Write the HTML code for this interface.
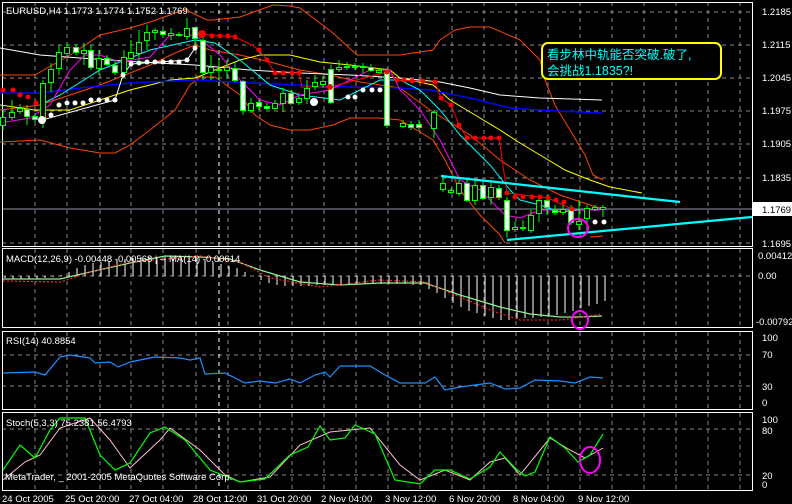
<!DOCTYPE html><html><head><meta charset="utf-8"><style>
html,body{margin:0;padding:0;background:#000;width:792px;height:504px;overflow:hidden}
svg{display:block;font-family:"Liberation Sans","Noto Sans CJK SC",sans-serif}
</style></head><body>
<svg width="792" height="504" viewBox="0 0 792 504" xmlns="http://www.w3.org/2000/svg">
<rect width="792" height="504" fill="#000"/>
<g stroke="#8a8a8a" stroke-width="1" stroke-dasharray="4,4" fill="none">
<path d="M2 12H752M2 45H752M2 78H752M2 111H752M2 144H752M2 178H752M2 243H752"/>
<path d="M35 2V247M67 2V247M100 2V247M131 2V247M163 2V247M196 2V247M228 2V247M260 2V247M292 2V247M324 2V247M356 2V247M388 2V247M420 2V247M452 2V247M484 2V247M516 2V247M548 2V247M580 2V247M612 2V247M644 2V247M676 2V247M708 2V247M740 2V247"/>
<path d="M35 249V327M67 249V327M100 249V327M131 249V327M163 249V327M196 249V327M228 249V327M260 249V327M292 249V327M324 249V327M356 249V327M388 249V327M420 249V327M452 249V327M484 249V327M516 249V327M548 249V327M580 249V327M612 249V327M644 249V327M676 249V327M708 249V327M740 249V327"/>
<path d="M35 332V409M67 332V409M100 332V409M131 332V409M163 332V409M196 332V409M228 332V409M260 332V409M292 332V409M324 332V409M356 332V409M388 332V409M420 332V409M452 332V409M484 332V409M516 332V409M548 332V409M580 332V409M612 332V409M644 332V409M676 332V409M708 332V409M740 332V409"/>
<path d="M35 413V490M67 413V490M100 413V490M131 413V490M163 413V490M196 413V490M228 413V490M260 413V490M292 413V490M324 413V490M356 413V490M388 413V490M420 413V490M452 413V490M484 413V490M516 413V490M548 413V490M580 413V490M612 413V490M644 413V490M676 413V490M708 413V490M740 413V490"/>
<path d="M2 276H752M2 355H752M2 386H752M2 429H752M2 475H752"/>
</g>
<g stroke="#fff" stroke-dasharray="4,4"><path d="M219 2V490"/></g>
<line x1="2" y1="209" x2="752" y2="209" stroke="#8a96a0"/>
<g fill="none" stroke="#fff" stroke-width="1">
<rect x="2.5" y="2.5" width="750" height="244"/>
<rect x="2.5" y="248.5" width="750" height="79"/>
<rect x="2.5" y="331.5" width="750" height="78"/>
<rect x="2.5" y="412.5" width="750" height="78"/>
</g>
<g fill="none" stroke-width="1">
<polyline stroke="#ff4500" points="0,75 35,75 75,52 100,35 130,28 150,22 170,15 187,9 190,12 207,20 213,20 240,17 273,5 290,6 300,8 333,33 357,55 400,55 433,50 440,40 455,30 470,27 490,27 520,40 540,60 545,80 555,105 570,130 585,155 593,175 603,180"/>
<polyline stroke="#ff4500" points="0,142 40,140 70,148 100,153 115,153 130,145 150,130 175,110 190,85 200,77 215,77 240,95 255,115 270,125 290,130 310,130 333,125 350,118 380,118 400,120 433,140 445,160 460,190 480,215 500,235 505,243"/>
<polyline stroke="#ff4500" points="590,237 603,236"/>
<polyline stroke="#ff4500" points="0,110 40,105 100,85 150,65 175,53 195,45 210,50 240,55 270,62 300,70 330,75 360,82 400,88 430,110 470,135 500,160 530,180 560,195 590,205 600,208"/>
<polyline stroke="#ffff00" points="0,105 35,110 70,110 100,100 130,90 170,80 195,78 215,70 240,60 260,55 290,55 320,62 350,65 390,70 400,78 433,85 450,100 470,112 500,130 520,143 540,155 565,170 590,180 610,187 642,193"/>
<polyline stroke="#fff" points="0,48 40,55 80,58 140,62 195,65 250,70 300,73 350,75 400,78 440,82 470,88 500,95 540,98 602,100"/>
<polyline stroke="#0000ff" stroke-width="1.5" points="0,93 40,93 80,88 130,83 195,80 250,83 300,85 350,87 400,88 430,90 470,98 510,108 540,110 602,113"/>
<polyline stroke="#00ffff" points="40,105 60,95 100,70 150,50 195,40 215,43 240,60 270,85 300,95 340,100 380,80 400,80 420,90 440,110 460,135 490,165 510,190 520,200 540,205 560,212 580,210 600,210"/>
<polyline stroke="#ff00ff" points="0,123 30,118 50,105 70,70 85,55 100,55 120,62 150,57 170,35 195,35 220,55 240,80 260,100 280,105 300,95 330,90 370,70 390,70 400,90 420,110 440,140 460,180 480,190 505,215 520,218 540,210 570,210 600,210"/>
<polyline stroke="#fff" points="195,48 187,60 131,64 123,75 115,100 42,120"/>
<polyline stroke="#f00" points="202,34 235,37 252,45 259,50 267,60 275,73 299,73 302,87 330,87 387,72 397,80 435,82 441,98 451,105 459,125 467,138 499,138 507,193 548,198 572,209"/>
</g>
<g stroke="#00ff00" stroke-width="1">
<path d="M3 110V130M12 100V120M20 104V114M27 105V125M35 113V122M43 80V128M51 63V92M59 45V75M67 42V56M76 44V55M84 43V65M91 45V70M99 50V75M107 55V66M115 60V75M124 50V78M131 40V60M139 30V60M147 25V50M155 28V40M163 28V36M171 28V40M179 32V37M187 18V40M195 27V45M203 35V80M211 55V80M219 60V80M227 60V78M235 62V82M243 80V115M251 98V113M259 99V110M267 103V110M275 100V110M283 88V112M291 90V105M299 95V105M307 80V104M315 75V90M323 76V88M331 65V104M339 60V72M347 62V70M355 63V70M363 63V73M371 64V72M379 68V74M387 68V128M403 120V128M411 121V130M419 120V130M434 110V138M443 175V192M451 188V194M459 180V196M467 180V202M475 178V205M483 182V200M491 180V205M499 185V200M507 197V238M515 222V232M523 220V231M531 210V233M539 195V222M547 195V215M555 205V215M563 205V215M571 205V225M579 200V230M587 205V230M595 205V211M603 205V217"/>
</g>
<g stroke="#00ff00" stroke-width="1">
<rect x="0.5" y="117.5" width="5" height="8" fill="#000"/>
<rect x="9.5" y="112.5" width="5" height="5" fill="#000"/>
<rect x="17.5" y="108.5" width="5" height="3" fill="#000"/>
<rect x="24.5" y="109.5" width="5" height="7" fill="#fff"/>
<rect x="32.5" y="116.5" width="5" height="3" fill="#fff"/>
<rect x="40.5" y="83.5" width="5" height="37" fill="#000"/>
<rect x="48.5" y="69.5" width="5" height="13" fill="#000"/>
<rect x="56.5" y="52.5" width="5" height="16" fill="#000"/>
<rect x="64.5" y="47.5" width="5" height="6" fill="#000"/>
<rect x="73.5" y="47.5" width="5" height="5" fill="#fff"/>
<rect x="81.5" y="50.5" width="5" height="3" fill="#000"/>
<rect x="88.5" y="50.5" width="5" height="17" fill="#fff"/>
<rect x="96.5" y="58.5" width="5" height="10" fill="#000"/>
<rect x="104.5" y="58.5" width="5" height="6" fill="#fff"/>
<rect x="112.5" y="65.5" width="5" height="7" fill="#fff"/>
<rect x="121.5" y="57.5" width="5" height="15" fill="#000"/>
<rect x="128.5" y="52.5" width="5" height="6" fill="#000"/>
<rect x="136.5" y="42.5" width="5" height="11" fill="#000"/>
<rect x="144.5" y="32.5" width="5" height="8" fill="#000"/>
<rect x="152.5" y="30.5" width="5" height="2" fill="#000"/>
<rect x="160.5" y="31.5" width="5" height="3" fill="#fff"/>
<rect x="168.5" y="33.5" width="5" height="2" fill="#000"/>
<rect x="176.5" y="34.5" width="5" height="1" fill="#000"/>
<rect x="184.5" y="28.5" width="5" height="8" fill="#000"/>
<rect x="192.5" y="27.5" width="5" height="11" fill="#fff"/>
<rect x="200.5" y="40.5" width="5" height="32" fill="#fff"/>
<rect x="208.5" y="67.5" width="5" height="5" fill="#000"/>
<rect x="216.5" y="69.5" width="5" height="1" fill="#000"/>
<rect x="224.5" y="67.5" width="5" height="3" fill="#000"/>
<rect x="232.5" y="68.5" width="5" height="12" fill="#fff"/>
<rect x="240.5" y="81.5" width="5" height="29" fill="#fff"/>
<rect x="248.5" y="103.5" width="5" height="7" fill="#000"/>
<rect x="256.5" y="102.5" width="5" height="4" fill="#fff"/>
<rect x="264.5" y="106.5" width="5" height="2" fill="#fff"/>
<rect x="272.5" y="103.5" width="5" height="5" fill="#000"/>
<rect x="280.5" y="93.5" width="5" height="10" fill="#000"/>
<rect x="288.5" y="93.5" width="5" height="10" fill="#fff"/>
<rect x="296.5" y="98.5" width="5" height="4" fill="#000"/>
<rect x="304.5" y="88.5" width="5" height="10" fill="#000"/>
<rect x="312.5" y="82.5" width="5" height="4" fill="#000"/>
<rect x="320.5" y="81.5" width="5" height="3" fill="#000"/>
<rect x="328.5" y="69.5" width="5" height="33" fill="#fff"/>
<rect x="336.5" y="67.5" width="5" height="2" fill="#000"/>
<rect x="344.5" y="66.5" width="5" height="1" fill="#000"/>
<rect x="352.5" y="66.5" width="5" height="1" fill="#000"/>
<rect x="360.5" y="66.5" width="5" height="1" fill="#000"/>
<rect x="368.5" y="67.5" width="5" height="3" fill="#fff"/>
<rect x="376.5" y="70.5" width="5" height="2" fill="#000"/>
<rect x="384.5" y="72.5" width="5" height="53" fill="#fff"/>
<rect x="400.5" y="123.5" width="5" height="3" fill="#000"/>
<rect x="408.5" y="124.5" width="5" height="3" fill="#fff"/>
<rect x="416.5" y="124.5" width="5" height="3" fill="#fff"/>
<rect x="431.5" y="112.5" width="5" height="16" fill="#000"/>
<rect x="440.5" y="183.5" width="5" height="6" fill="#000"/>
<rect x="448.5" y="190.5" width="5" height="2" fill="#000"/>
<rect x="456.5" y="183.5" width="5" height="10" fill="#000"/>
<rect x="464.5" y="183.5" width="5" height="17" fill="#fff"/>
<rect x="472.5" y="185.5" width="5" height="15" fill="#000"/>
<rect x="480.5" y="185.5" width="5" height="13" fill="#fff"/>
<rect x="488.5" y="187.5" width="5" height="10" fill="#000"/>
<rect x="496.5" y="188.5" width="5" height="9" fill="#fff"/>
<rect x="504.5" y="200.5" width="5" height="30" fill="#fff"/>
<rect x="512.5" y="227.5" width="5" height="2" fill="#000"/>
<rect x="520.5" y="227.5" width="5" height="1" fill="#000"/>
<rect x="528.5" y="215.5" width="5" height="15" fill="#000"/>
<rect x="536.5" y="200.5" width="5" height="13" fill="#000"/>
<rect x="544.5" y="200.5" width="5" height="7" fill="#fff"/>
<rect x="552.5" y="210.5" width="5" height="2" fill="#fff"/>
<rect x="560.5" y="209.5" width="5" height="3" fill="#000"/>
<rect x="568.5" y="210.5" width="5" height="12" fill="#fff"/>
<rect x="576.5" y="221.5" width="5" height="3" fill="#000"/>
<rect x="584.5" y="208.5" width="5" height="10" fill="#000"/>
<rect x="592.5" y="207.5" width="5" height="2" fill="#000"/>
<rect x="600.5" y="207.5" width="5" height="2" fill="#000"/>
</g>
<g fill="#ff0000">
<circle cx="3" cy="90" r="2.5"/><circle cx="13" cy="90" r="2.5"/><circle cx="20" cy="95" r="2.5"/><circle cx="28" cy="97" r="2.5"/><circle cx="36" cy="103" r="2.5"/>
<circle cx="202" cy="34" r="4"/><circle cx="212" cy="36" r="2.5"/><circle cx="220" cy="36" r="2.5"/><circle cx="228" cy="36" r="2.5"/><circle cx="235" cy="37" r="2.5"/><circle cx="259" cy="50" r="2.5"/><circle cx="267" cy="60" r="2.5"/><circle cx="275" cy="73" r="2.5"/><circle cx="283" cy="73" r="2.5"/><circle cx="292" cy="73" r="2.5"/><circle cx="299" cy="73" r="2.5"/><circle cx="330" cy="87" r="3"/><circle cx="387" cy="72" r="2.5"/><circle cx="397" cy="80" r="2.5"/><circle cx="404" cy="80" r="2.5"/><circle cx="412" cy="81" r="2.5"/><circle cx="423" cy="81" r="2.5"/><circle cx="435" cy="82" r="2.5"/><circle cx="441" cy="98" r="2.5"/><circle cx="451" cy="105" r="2.5"/><circle cx="459" cy="125" r="2.5"/><circle cx="467" cy="138" r="2.5"/><circle cx="475" cy="138" r="2.5"/><circle cx="484" cy="138" r="2.5"/><circle cx="491" cy="138" r="2.5"/><circle cx="499" cy="138" r="2.5"/><circle cx="507" cy="193" r="2.5"/><circle cx="515" cy="197" r="2.5"/><circle cx="523" cy="197" r="2.5"/><circle cx="532" cy="197" r="2.5"/><circle cx="540" cy="197" r="2.5"/><circle cx="548" cy="198" r="2.5"/><circle cx="556" cy="200" r="2.5"/><circle cx="564" cy="202" r="2.5"/><circle cx="572" cy="209" r="2.5"/>
</g>
<g fill="#fff">
<circle cx="42" cy="120" r="4"/><circle cx="51" cy="115" r="2.5"/><circle cx="59" cy="105" r="2.5"/><circle cx="67" cy="103" r="2.5"/><circle cx="75" cy="103" r="2.5"/><circle cx="83" cy="103" r="2.5"/><circle cx="91" cy="100" r="2.5"/><circle cx="99" cy="100" r="2.5"/><circle cx="107" cy="100" r="2.5"/><circle cx="115" cy="100" r="2.5"/><circle cx="123" cy="75" r="2.5"/><circle cx="131" cy="64" r="2.5"/><circle cx="139" cy="63" r="2.5"/><circle cx="147" cy="62" r="2.5"/><circle cx="155" cy="62" r="2.5"/><circle cx="163" cy="62" r="2.5"/><circle cx="171" cy="62" r="2.5"/><circle cx="179" cy="62" r="2.5"/><circle cx="187" cy="60" r="2.5"/><circle cx="195" cy="48" r="2.5"/>
<circle cx="314" cy="102" r="4"/><circle cx="348" cy="97" r="2.5"/><circle cx="355" cy="97" r="2.5"/><circle cx="363" cy="90" r="2.5"/><circle cx="372" cy="90" r="2.5"/><circle cx="380" cy="90" r="2.5"/><circle cx="595" cy="222" r="2.5"/><circle cx="604" cy="222" r="2.5"/>
</g>
<g stroke="#00ffff" stroke-width="2.2" fill="none">
<polyline points="441,176 680,202"/><polyline points="507,240 752,217"/>
</g>
<ellipse cx="578" cy="228" rx="10" ry="9" fill="none" stroke="#ff00ff" stroke-width="2"/>
<rect x="542" y="43" width="179" height="36" rx="6" fill="#000" stroke="#ffff00" stroke-width="2"/>
<text x="547" y="59" fill="#00ffff" font-size="12.5">看步林中轨能否突破.破了,</text>
<text x="547" y="75" fill="#00ffff" font-size="12.5">会挑战1.1835?!</text>
<text x="6" y="14" fill="#fff" font-size="9.5">EURUSD,H4  1.1773 1.1774 1.1752 1.1769</text>
<g fill="#fff" font-size="9.5">
<text x="762" y="15">1.2185</text><text x="762" y="48">1.2115</text><text x="762" y="81">1.2045</text><text x="762" y="114">1.1975</text><text x="762" y="147">1.1905</text><text x="762" y="181">1.1835</text><text x="762" y="247">1.1695</text>
</g>
<rect x="753" y="202" width="39" height="14" fill="#fff"/>
<text x="762" y="213" fill="#000" font-size="9.5">1.1769</text>
<g stroke="#fff" stroke-width="1">
<path d="M5 276V278M13 276V279M21 276V279M29 276V279M37 276V279M45 276V278M53 276V277M61 276V275M69 276V272M77 276V268M85 276V265M93 276V263M101 276V262M109 276V261M117 276V260M125 276V259M133 276V258M141 276V257M149 276V257M157 276V257M165 276V257M173 276V257M181 276V257M189 276V258M197 276V258M205 276V260M213 276V262M221 276V264M229 276V266M237 276V268M245 276V272M261 276V280M269 276V283M277 276V285M285 276V286M293 276V286M301 276V286M309 276V286M317 276V285M325 276V285M333 276V285M341 276V285M349 276V284M357 276V284M365 276V284M373 276V284M381 276V284M389 276V284M397 276V284M405 276V284M413 276V285M421 276V285M429 276V289M437 276V293M445 276V298M453 276V303M461 276V307M469 276V311M477 276V313M485 276V316M493 276V318M501 276V320M509 276V320M517 276V319M525 276V318M533 276V318M541 276V317M549 276V316M557 276V315M565 276V313M573 276V311M581 276V308M589 276V306M597 276V304M605 276V301"/>
</g>
<polyline fill="none" stroke="#90ee90" stroke-width="1.2" points="3,279 60,279 90,272 130,263 165,256 200,257 230,259 260,270 300,282 340,285 380,283 425,283 460,295 500,307 530,314 560,317 580,317 602,316"/>
<polyline fill="none" stroke="#ff2020" stroke-width="1.2" stroke-dasharray="2,2" points="3,281 60,282 90,272 130,262 200,256 240,262 270,278 320,287 380,280 425,282 460,297 490,310 520,320 560,320 590,316 600,314"/>
<ellipse cx="580" cy="320" rx="8" ry="9" fill="none" stroke="#ff00ff" stroke-width="2"/>
<text x="6" y="262" fill="#fff" font-size="9.5">MACD(12,26,9) -0.00448 -0.00568 | -- MA(14) -0.00614</text>
<g fill="#fff" font-size="9.5"><text x="758" y="259">0.00412</text><text x="758" y="279">0.00</text><text x="756" y="325">-0.00792</text></g>
<polyline fill="none" stroke="#1e90ff" stroke-width="1.2" points="3,373 35,372 45,375 60,357 70,355 90,358 95,363 110,362 118,367 130,362 155,357 180,358 190,360 200,358 205,374 225,373 245,383 260,381 275,383 290,379 300,383 315,375 325,372 330,377 340,366 370,366 385,375 400,383 425,383 435,377 445,390 460,387 475,385 490,383 505,389 520,388 535,380 560,381 575,383 590,377 603,378"/>
<text x="6" y="344" fill="#fff" font-size="9.5">RSI(14) 40.8854</text>
<g fill="#fff" font-size="9.5"><text x="762" y="341">100</text><text x="762" y="358">70</text><text x="762" y="390">30</text><text x="762" y="406">0</text></g>
<polyline fill="none" stroke="#ffc0cb" stroke-width="1" points="3,480 25,462 40,455 60,428 90,418 110,440 130,468 160,440 170,428 200,450 225,475 240,482 270,477 300,445 330,432 370,428 400,465 420,480 445,470 470,480 490,462 505,458 520,475 550,438 570,450 585,458 603,448"/>
<polyline fill="none" stroke="#00ff00" stroke-width="1.2" points="3,470 20,445 35,458 50,430 60,418 85,418 100,455 115,470 130,463 150,433 165,427 185,440 210,470 240,482 265,479 290,455 308,447 320,426 330,440 345,438 355,425 375,434 395,480 420,484 435,470 450,470 470,479 490,467 500,452 515,468 525,476 535,472 550,437 565,448 578,462 590,455 603,434"/>
<ellipse cx="590" cy="460" rx="10" ry="13" fill="none" stroke="#ff00ff" stroke-width="2"/>
<text x="6" y="426" fill="#fff" font-size="9.5">Stoch(5,3,3) 75.2381 56.4793</text>
<text x="5" y="480" fill="#fff" font-size="9.5">MetaTrader, _ 2001-2005 MetaQuotes Software Corp.</text>
<g fill="#fff" font-size="9.5"><text x="762" y="423">100</text><text x="762" y="434">80</text><text x="762" y="479">20</text><text x="762" y="488">0</text></g>
<g fill="#fff" font-size="9.5">
<text x="2" y="502">24 Oct 2005</text><text x="65" y="502">25 Oct 20:00</text><text x="129" y="502">27 Oct 04:00</text><text x="193" y="502">28 Oct 12:00</text><text x="257" y="502">31 Oct 20:00</text><text x="321" y="502">2 Nov 04:00</text><text x="385" y="502">3 Nov 12:00</text><text x="449" y="502">6 Nov 20:00</text><text x="513" y="502">8 Nov 04:00</text><text x="578" y="502">9 Nov 12:00</text>
</g>
</svg>
</body></html>
